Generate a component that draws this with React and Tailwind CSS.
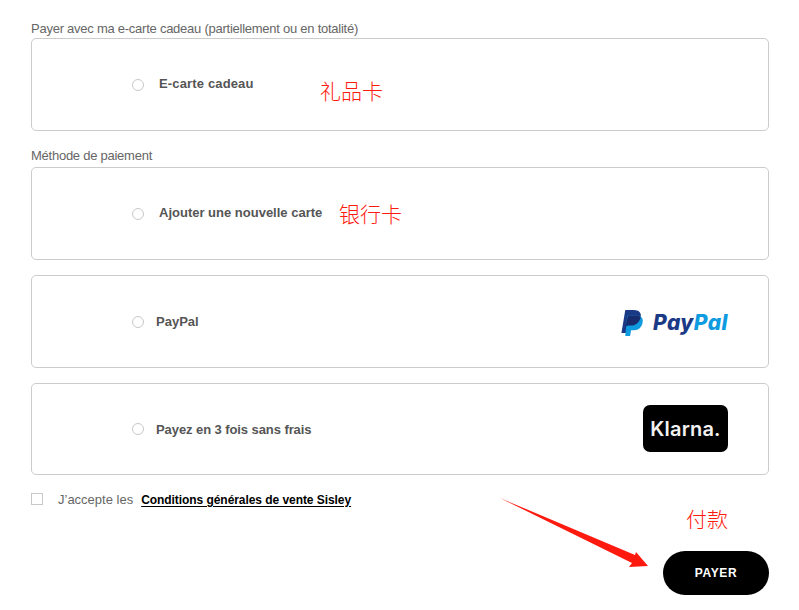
const Radio = () => (
  <span className="w-3 h-3 rounded-full border border-[#c8c8c8] bg-white shrink-0" />
);

const PaymentCard = ({ label, labelClass, cardClass = 'h-[93px]', children }) => (
  <div className={`relative ${cardClass} rounded-[5px] border border-[#cccccc] bg-white flex items-center pl-[100px] pr-10`}>
    <Radio />
    <span className={`text-[13px] font-bold text-[#555555] ${labelClass}`}>{label}</span>
    {children}
  </div>
);

const PaypalLogo = () => (
  <div className="ml-auto flex items-center gap-[9px] mt-[2px]">
    <svg width="23" height="26" viewBox="0 0 23 27">
      <path d="M4 0h9c5 0 8 3 7 7-1 6-5 9-10 9H7l-2 8H0z" fill="#1b3a86" />
      <path d="M6 6h9c5 0 8 2 7 7-1 5-4 8-9 8h-3l-1 6H4z" fill="#0f9bdf" />
      <path d="M6.500 6H15c2 0 4 .4 5 1.400C19 12.500 15 16 10 16H7l-2.500 1z" fill="#182c6d" />
    </svg>
    <span className="font-['Inter',sans-serif] text-[21px] leading-none font-extrabold italic tracking-[0.45px] text-[#1b3a86]">
      Pay<span className="text-[#0f9bdf]">Pal</span>
    </span>
  </div>
);

const KlarnaLogo = () => (
  <div className="ml-auto -mt-[1px] w-[85px] h-[47px] rounded-[7px] bg-black flex items-center justify-center">
    <span className="font-['Inter',sans-serif] text-[20px] font-semibold text-[#f2f2f2] tracking-[0.2px]">Klarna.</span>
  </div>
);

const Note = ({ className, children }) => (
  <span className={`absolute font-['Noto_Sans_CJK_SC',sans-serif] font-light text-[21px] leading-none text-[#ff1a0f] ${className}`}>
    {children}
  </span>
);

export default function App() {
  return (
    <div className="relative w-[799px] h-[610px] overflow-hidden bg-white pl-[31px] pr-[30px] pt-[20px] font-['Liberation_Sans',sans-serif]">
      <p className="mb-[1px] text-[13px] leading-[17px] tracking-[-0.25px] text-[#666666]">
        Payer avec ma e-carte cadeau (partiellement ou en totalité)
      </p>
      <PaymentCard label="E-carte cadeau" labelClass="ml-[15px] -mt-[1px] tracking-[0.15px]">
        <Note className="left-[288px] top-[41px]">礼品卡</Note>
      </PaymentCard>

      <p className="mt-[16px] mb-[3px] text-[13px] leading-[17px] tracking-[-0.25px] text-[#666666]">Méthode de paiement</p>
      <div className="flex flex-col gap-[15px]">
        <PaymentCard label="Ajouter une nouvelle carte" labelClass="ml-[15px] -mt-[1px]">
          <Note className="left-[307px] top-[35px]">银行卡</Note>
        </PaymentCard>
        <PaymentCard label="PayPal" labelClass="ml-[12px] mt-[1px]">
          <PaypalLogo />
        </PaymentCard>
        <PaymentCard label="Payez en 3 fois sans frais" labelClass="ml-[12px] mt-[1px] tracking-[-0.08px]" cardClass="h-[92px]">
          <KlarnaLogo />
        </PaymentCard>
      </div>

      <div className="flex items-center mt-[17px] h-[14px]">
        <span className="w-3 h-3 border border-[#c8c8c8] bg-white" />
        <span className="ml-[15px] mt-[1px] text-[13px] text-[#666666]">J’accepte les</span>
        <a href="#" className="ml-[8px] mt-[1px] text-[12px] tracking-[-0.06px] font-bold text-black underline underline-offset-2">
          Conditions générales de vente Sisley
        </a>
      </div>

      <div className="flex justify-end mt-[45px]">
        <button className="w-[106px] h-11 rounded-full bg-black text-white text-[12px] font-bold tracking-[0.6px]">
          PAYER
        </button>
      </div>

      <Note className="left-[686px] top-[508px]">付款</Note>

      <svg className="absolute left-0 top-0 pointer-events-none" width="799" height="610" viewBox="0 0 799 610">
        <polygon points="500,498 635,555 636,552 648,566 629,567 632,563" fill="#ff1a0f" />
      </svg>
    </div>
  );
}
